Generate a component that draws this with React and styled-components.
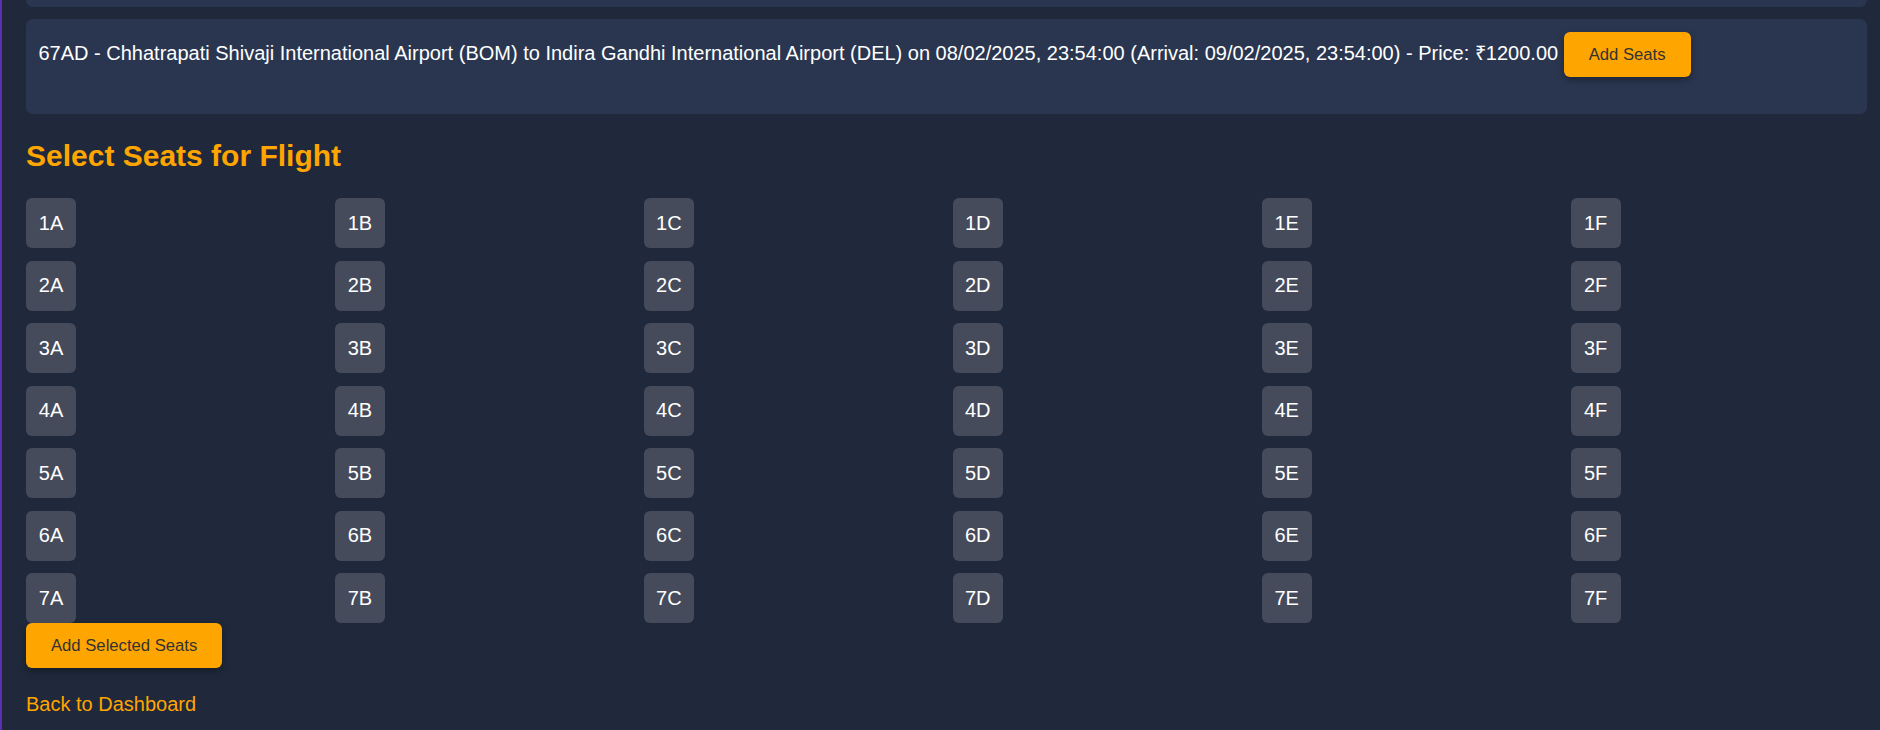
import React, { useState } from "react";
import styled, { createGlobalStyle } from "styled-components";

const GlobalStyle = createGlobalStyle`
  html, body {
    margin: 0;
    padding: 0;
    background: #1f293b;
  }
  body {
    font-family: "Liberation Sans", Arial, sans-serif;
    color: #ffffff;
  }
`;

const flight = {
  id: "67AD",
  text: "67AD - Chhatrapati Shivaji International Airport (BOM) to Indira Gandhi International Airport (DEL) on 08/02/2025, 23:54:00 (Arrival: 09/02/2025, 23:54:00) - Price: ₹1200.00",
};

const rows = [1, 2, 3, 4, 5, 6, 7];
const cols = ["A", "B", "C", "D", "E", "F"];

export default function App() {
  const [selected, setSelected] = useState([]);

  // toggles a seat in the selection
  function toggleSeat(seat) {
    if (selected.includes(seat)) {
      setSelected(selected.filter((s) => s !== seat));
    } else {
      setSelected([...selected, seat]);
    }
  }

  return (
    <Page>
      <GlobalStyle />
      <FlightList>
        <FlightItem aria-hidden="true" />
        <FlightItem>
          {flight.text} <OrangeButton>Add Seats</OrangeButton>
        </FlightItem>
      </FlightList>

      <Heading>Select Seats for Flight</Heading>
      <SeatGrid>
        {rows.map((row) =>
          cols.map((col) => {
            const seat = `${row}${col}`;
            return (
              <SeatCell key={seat}>
                <Seat
                  $selected={selected.includes(seat)}
                  onClick={() => toggleSeat(seat)}
                >
                  {seat}
                </Seat>
              </SeatCell>
            );
          })
        )}
      </SeatGrid>
      <OrangeButton $block>Add Selected Seats</OrangeButton>
      <BackLink href="#">Back to Dashboard</BackLink>
    </Page>
  );
}

const Page = styled.div`
  min-height: 730px;
  box-sizing: border-box;
  border-left: 2px solid #5b2fb0;
  padding: 0 13px 0 24px;
  overflow: hidden;
  font-size: 20px;
`;

const FlightList = styled.ul`
  list-style: none;
  padding: 0;
  margin: -88px 0 0 0;
  display: flex;
  flex-direction: column;
  gap: 12px;
`;

const FlightItem = styled.li`
  background: #2a3650;
  border-radius: 7px;
  padding: 12px 12.5px 14px;
  height: 95px;
  box-sizing: border-box;
  line-height: 44px;
  white-space: nowrap;
`;

const OrangeButton = styled.button`
  display: ${(p) => (p.$block ? "block" : "inline-block")};
  background: #ffa500;
  color: #333333;
  border: none;
  border-radius: 6px;
  padding: 12.5px 25px;
  font-family: "Liberation Sans", Arial, sans-serif;
  font-size: 16.67px;
  line-height: 19.5px;
  box-shadow: 0 3px 7px rgba(0, 0, 0, 0.35);
  cursor: pointer;
  vertical-align: middle;
`;

const Heading = styled.h2`
  color: #ffa500;
  font-size: 30px;
  font-weight: bold;
  margin: 25px 0 25px 0;
`;

const SeatGrid = styled.div`
  display: grid;
  grid-template-columns: repeat(6, 1fr);
  gap: 12.5px 12.5px;
`;

const SeatCell = styled.div`
  display: flex;
`;

const Seat = styled.button`
  width: 50px;
  height: 50px;
  border: none;
  border-radius: 6px;
  background: ${(p) => (p.$selected ? "#ffa500" : "#454b5b")};
  color: #ffffff;
  font-family: "Liberation Sans", Arial, sans-serif;
  font-size: 20px;
  padding: 0;
  cursor: pointer;
`;

const BackLink = styled.a`
  display: block;
  width: fit-content;
  margin-top: 25px;
  color: #ffa500;
  text-decoration: none;
  font-size: 20px;
`;
